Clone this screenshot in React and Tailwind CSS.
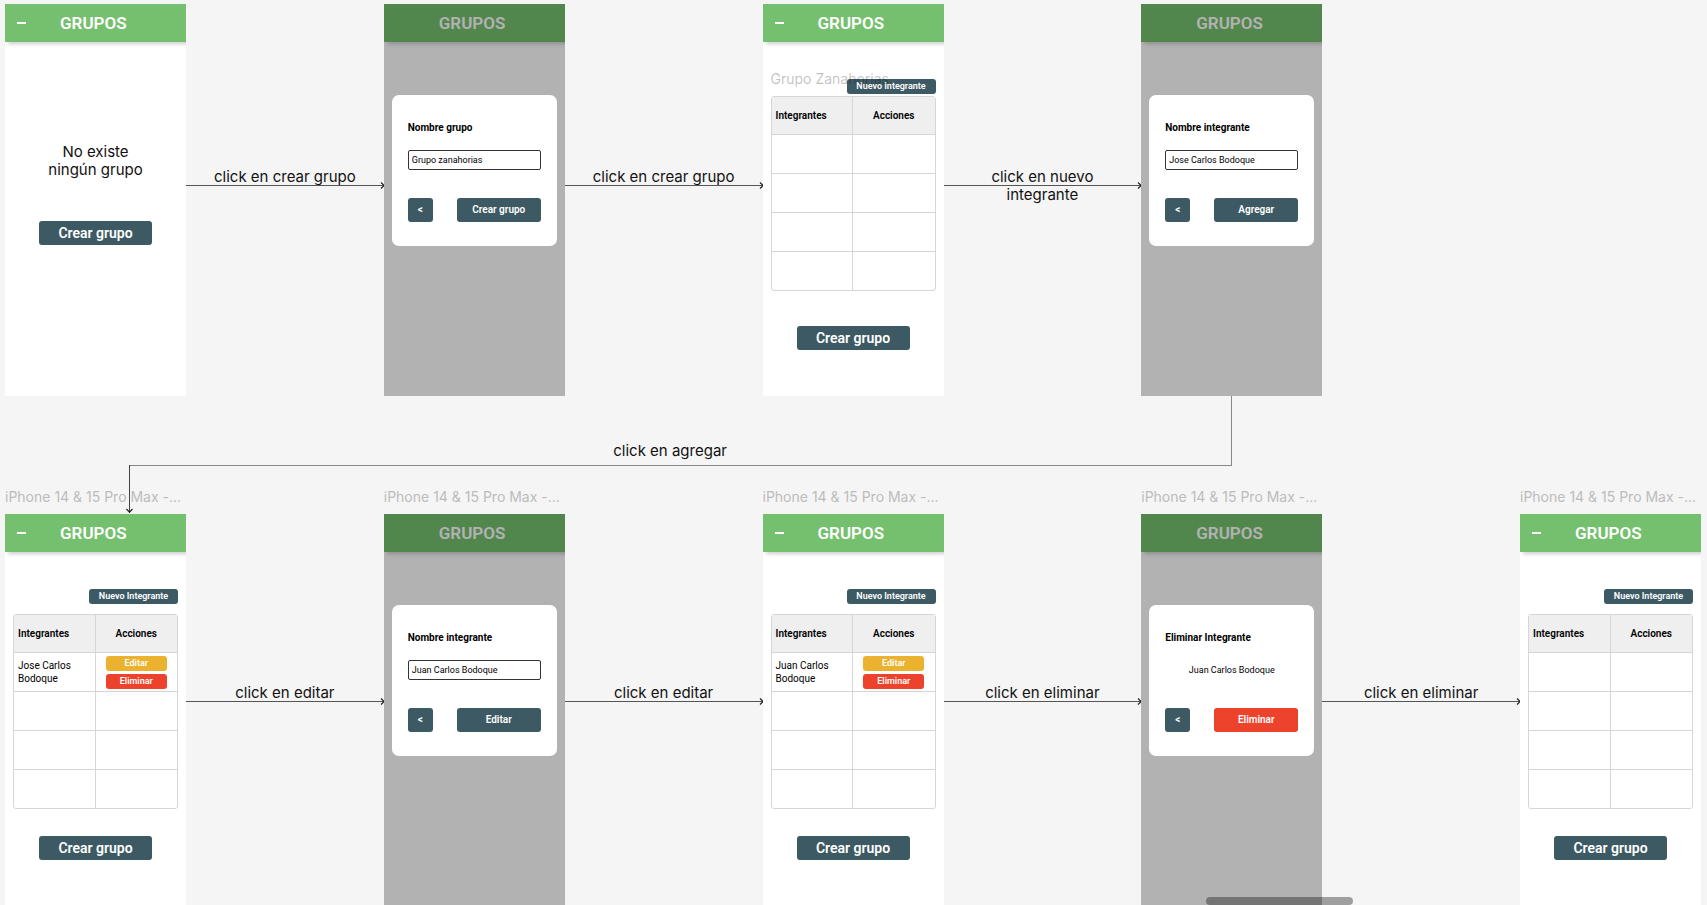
import React, { useId } from "react";

const TRACK =
  "grid grid-cols-[181px_1fr_181px_1fr_181px_1fr_181px_1fr_181px] pl-[5px] pr-1.5";

const NOTE = "text-[15px] leading-[18px] text-[#111]";

function ArrowHead({ className }) {
  return (
    <svg
      className={className}
      width="5"
      height="7"
      viewBox="0 0 5 7"
      fill="none"
      stroke="#222"
      strokeWidth="1.2"
      aria-hidden="true"
    >
      <path d="M1 0.5 4.2 3.5 1 6.5" />
    </svg>
  );
}

function Connector({ lines, low }) {
  return (
    <div className={`relative ${low ? "pt-[170px]" : "pt-[164px]"}`}>
      <p className={`text-center ${NOTE}`}>
        {lines.map((line) => (
          <span key={line} className="block">
            {line}
          </span>
        ))}
      </p>
      <div
        className={`absolute left-0 -right-px flex h-[7px] items-center ${
          low ? "top-[184px]" : "top-[178px]"
        }`}
      >
        <div className="h-px flex-1 bg-[#555]" />
        <ArrowHead className="-ml-1" />
      </div>
    </div>
  );
}

function Header({ menu }) {
  return (
    <header className="flex h-[38px] items-center bg-[#75c06e] shadow-[3px_2px_4px_rgba(0,0,0,0.2)]">
      <div className="flex w-[55px] pl-3">
        {menu && (
          <button type="button" aria-label="Menú" className="py-2">
            <span className="block h-0.5 w-[9px] bg-white" />
          </button>
        )}
      </div>
      <h2 className="text-[17px] leading-5 font-semibold text-white">GRUPOS</h2>
    </header>
  );
}

function Phone({ menu, children }) {
  return (
    <section className="relative h-[392px] overflow-hidden bg-white font-['Roboto',sans-serif] text-black">
      <Header menu={menu} />
      {children}
    </section>
  );
}

function CreateButton() {
  return (
    <button
      type="button"
      className="block h-6 w-[113px] rounded-[3px] bg-[#3d5a64] text-sm leading-5 font-semibold text-white"
    >
      Crear grupo
    </button>
  );
}

function EmptyPhone() {
  return (
    <Phone menu>
      <p className={`mt-[101px] text-center font-['Inter',sans-serif] ${NOTE}`}>
        No existe
        <br />
        ningún grupo
      </p>
      <div className="mt-[42px] flex justify-center">
        <CreateButton />
      </div>
    </Phone>
  );
}

const SMALL =
  "block h-[15px] rounded-[3px] text-[9px] leading-[15px] font-semibold text-white";

function TablePhone({ title, member }) {
  return (
    <Phone menu>
      <div className="flex h-[284px] flex-col px-2 pt-[37px]">
        <div className="relative flex justify-end">
          <button type="button" className={`w-[89px] bg-[#3d5a64] ${SMALL}`}>
            Nuevo Integrante
          </button>
          {title && (
            <h3 className="absolute -top-[9px] left-0 font-['Inter',sans-serif] text-sm leading-[18px] whitespace-nowrap text-black/25">
              {title}
            </h3>
          )}
        </div>
        <table
          className={`w-full table-fixed border-separate border-spacing-0 rounded-[3px] border border-[#d6d6d6] text-[10px] leading-[13px] ${
            title ? "mt-0.5" : "mt-2.5"
          }`}
        >
          <thead>
            <tr className="bg-[#efefef]">
              <th className="h-[37px] border-r border-[#d6d6d6] px-1 text-left font-semibold">
                Integrantes
              </th>
              <th className="h-[37px] p-0 text-center font-semibold">Acciones</th>
            </tr>
          </thead>
          <tbody>
            {[member, null, null, null].map((name, i) => (
              <tr key={i}>
                <td className="h-[39px] border-t border-r border-[#d6d6d6] px-1 py-0">{name}</td>
                <td className="h-[39px] border-t border-[#d6d6d6] p-0">
                  {name && (
                    <div className="flex flex-col items-center gap-[3px]">
                      <button type="button" className={`w-[61px] bg-[#ebb22f] ${SMALL}`}>
                        Editar
                      </button>
                      <button type="button" className={`w-[61px] bg-[#ed432d] ${SMALL}`}>
                        Eliminar
                      </button>
                    </div>
                  )}
                </td>
              </tr>
            ))}
          </tbody>
        </table>
      </div>
      <div className="flex justify-center">
        <CreateButton />
      </div>
    </Phone>
  );
}

function DialogPhone({ title, value, action, danger }) {
  const id = useId();
  const heading = "block text-[10px] leading-[15px] font-bold";
  return (
    <Phone>
      <div className="absolute inset-0 bg-black/30 px-2 pt-[91px]">
        <div className="rounded-[7px] bg-white px-4 pt-[25px] pb-6">
          {danger ? (
            <>
              <h3 className={heading}>{title}</h3>
              <p className="mt-[15px] text-center text-[9px] leading-5">{value}</p>
            </>
          ) : (
            <>
              <label htmlFor={id} className={heading}>
                {title}
              </label>
              <input
                id={id}
                type="text"
                defaultValue={value}
                className="mt-[15px] block h-5 w-full rounded-[2px] border border-[#333] px-[3px] text-[9px] leading-4"
              />
            </>
          )}
          <div className="mt-7 flex justify-between text-[10px] leading-6 font-semibold text-white">
            <button type="button" aria-label="Volver" className="h-6 w-[25px] rounded-[3px] bg-[#3d5a64]">
              &lt;
            </button>
            <button
              type="button"
              className={`h-6 w-[84px] rounded-[3px] ${danger ? "bg-[#ed432d]" : "bg-[#3d5a64]"}`}
            >
              {action}
            </button>
          </div>
        </div>
      </div>
    </Phone>
  );
}

function FrameLabel() {
  return (
    <p className="mb-2 text-sm leading-[18px] whitespace-nowrap text-[#bcbcbc]">
      iPhone 14 &amp; 15 Pro Max -...
    </p>
  );
}

export default function App() {
  return (
    <main className="relative h-screen overflow-hidden bg-[#f5f5f5] pt-1 font-['Inter',sans-serif]">
      <div className={TRACK}>
        <EmptyPhone />
        <Connector lines={["click en crear grupo"]} />
        <DialogPhone title="Nombre grupo" value="Grupo zanahorias" action="Crear grupo" />
        <Connector lines={["click en crear grupo"]} />
        <TablePhone title="Grupo Zanahorias" />
        <Connector lines={["click en nuevo", "integrante"]} />
        <DialogPhone title="Nombre integrante" value="Jose Carlos Bodoque" action="Agregar" />
      </div>

      <div className={`${TRACK} pb-[22px]`}>
        <div className="relative z-10 col-span-7 mr-[90px] ml-[124px] flex h-[70px] items-end justify-center border-r border-b border-[#888] pr-5 pb-[5px]">
          <p className={NOTE}>click en agregar</p>
          <div className="absolute top-full left-0 h-12 w-px bg-[#444]">
            <ArrowHead className="absolute -bottom-px -left-0.5 rotate-90" />
          </div>
        </div>
      </div>

      <div className={TRACK}>
        {[0, 1, 2, 3, 4].map((i) => (
          <div key={i} className="col-span-2 last:col-span-1">
            <FrameLabel />
          </div>
        ))}
      </div>
      <div className={TRACK}>
        <TablePhone member="Jose Carlos Bodoque" />
        <Connector low lines={["click en editar"]} />
        <DialogPhone title="Nombre integrante" value="Juan Carlos Bodoque" action="Editar" />
        <Connector low lines={["click en editar"]} />
        <TablePhone member="Juan Carlos Bodoque" />
        <Connector low lines={["click en eliminar"]} />
        <DialogPhone title="Eliminar Integrante" value="Juan Carlos Bodoque" action="Eliminar" danger />
        <Connector low lines={["click en eliminar"]} />
        <TablePhone />
      </div>

      <div className="absolute right-[354px] bottom-0 h-2 w-[147px] rounded-full bg-black/35" />
    </main>
  );
}
